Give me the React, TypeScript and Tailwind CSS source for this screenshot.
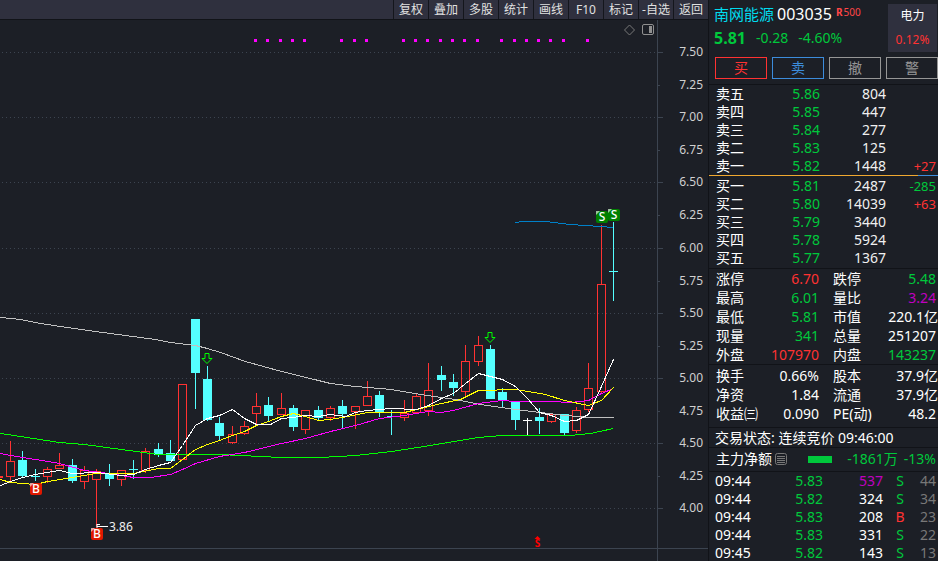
type Candle = {
  x: number;
  top: number;
  bottom: number;
  high: number;
  low: number;
  kind: "up" | "down" | "flat";
};

const UP = "#ff3232";
const DOWN = "#54ffff";

const c = (
  x: number,
  top: number,
  bottom: number,
  high: number,
  low: number,
  kind: Candle["kind"],
): Candle => ({ x, top, bottom, high, low, kind });

const candles: Candle[] = [
  c(-2, 476, 478, 476, 478, "up"),
  c(10, 461, 477, 441, 481, "up"),
  c(22, 460, 476, 451, 477, "down"),
  c(35, 476, 476, 469, 481, "down"),
  c(47, 469, 477, 467, 483, "up"),
  c(59, 465, 469, 453, 469, "up"),
  c(72, 465, 481, 459, 483, "down"),
  c(84, 470, 482, 466, 489, "up"),
  c(96, 471, 480, 469, 527, "up"),
  c(109, 473, 479, 464, 486, "down"),
  c(121, 470, 480, 470, 486, "up"),
  c(133, 469, 469, 460, 479, "down"),
  c(145, 451, 471, 448, 473, "up"),
  c(158, 449, 455, 443, 457, "down"),
  c(170, 453, 461, 440, 461, "down"),
  c(182, 384, 460, 384, 460, "up"),
  c(195, 319, 373, 319, 409, "down"),
  c(207, 379, 420, 366, 421, "down"),
  c(219, 423, 436, 417, 441, "down"),
  c(232, 434, 443, 426, 444, "up"),
  c(244, 426, 434, 421, 435, "up"),
  c(256, 406, 414, 393, 424, "up"),
  c(268, 405, 416, 397, 421, "down"),
  c(281, 408, 415, 393, 415, "up"),
  c(293, 408, 427, 405, 431, "down"),
  c(305, 410, 430, 410, 434, "up"),
  c(318, 410, 418, 406, 420, "down"),
  c(330, 408, 418, 406, 421, "up"),
  c(342, 406, 414, 400, 428, "down"),
  c(355, 406, 412, 406, 429, "up"),
  c(367, 396, 406, 381, 406, "up"),
  c(379, 395, 413, 391, 417, "down"),
  c(391, 416, 416, 410, 435, "down"),
  c(404, 413, 418, 400, 421, "up"),
  c(416, 396, 413, 394, 413, "up"),
  c(428, 390, 411, 363, 416, "up"),
  c(441, 375, 380, 366, 391, "down"),
  c(453, 382, 388, 374, 396, "down"),
  c(465, 361, 392, 345, 396, "up"),
  c(478, 345, 362, 336, 366, "up"),
  c(490, 349, 399, 345, 399, "down"),
  c(502, 392, 400, 388, 407, "down"),
  c(515, 401, 420, 401, 430, "down"),
  c(527, 420, 420, 418, 436, "flat"),
  c(539, 417, 421, 408, 434, "down"),
  c(551, 414, 422, 414, 423, "up"),
  c(564, 414, 433, 414, 435, "down"),
  c(576, 410, 431, 407, 433, "up"),
  c(588, 388, 410, 363, 412, "up"),
  c(601, 284, 392, 225, 393, "up"),
  c(613, 271, 271, 222, 301, "down"),
];

const averages = [
  {
    color: "#c0c0c0",
    points:
      "0,317 20,319 40,323 67,327 95,331 125,335 155,339 170,342 195,345 207,348 220,352 245,361 281,371 318,380 330,383 355,386 391,389 420,394 455,399 480,404 515,409 540,412 565,415 590,417 613,417",
  },
  {
    color: "#00ff00",
    points:
      "0,433 20,436 59,442 84,444 121,449 158,454 182,454 219,454 240,455 280,457 320,457 355,455 391,451 430,445 453,441 478,437 502,435 551,435 570,435 590,433 613,428",
  },
  {
    color: "#ff00ff",
    points:
      "0,453 10,455 35,459 59,463 84,470 109,473 133,477 150,477 170,474 182,469 195,463 219,456 244,452 281,443 305,438 330,431 355,425 379,418 404,415 428,411 440,412 453,410 478,403 502,400 515,401 551,401 570,402 588,400 601,393 613,388",
  },
  {
    color: "#ffff00",
    points:
      "0,479 10,482 35,484 47,481 72,477 96,473 133,473 158,468 170,468 182,459 195,449 207,444 219,440 232,435 244,431 256,425 268,421 281,416 293,413 305,416 318,420 330,419 342,417 367,412 404,412 416,409 441,403 460,399 478,390 515,389 527,391 545,394 564,400 588,405 601,400 613,387",
  },
  {
    color: "#ffffff",
    points:
      "0,485 10,481 22,477 35,474 47,472 59,470 72,473 96,472 121,475 133,474 145,469 158,465 170,462 182,445 195,425 207,418 219,415 232,409 244,418 256,424 270,424 281,418 293,417 305,415 318,416 330,414 345,416 355,412 367,410 391,408 416,409 428,405 441,398 453,393 465,383 478,373 490,376 502,379 515,386 527,398 539,412 551,415 564,421 576,420 588,414 601,386 613,359",
  },
  {
    color: "#0080c8",
    points: "515,222 522,221 545,221 570,224 600,226 613,227",
  },
];

const axis = [
  { label: "7.50", y: 52 },
  { label: "7.25", y: 85 },
  { label: "7.00", y: 117 },
  { label: "6.75", y: 150 },
  { label: "6.50", y: 182 },
  { label: "6.25", y: 215 },
  { label: "6.00", y: 248 },
  { label: "5.75", y: 281 },
  { label: "5.50", y: 313 },
  { label: "5.25", y: 346 },
  { label: "5.00", y: 378 },
  { label: "4.75", y: 411 },
  { label: "4.50", y: 443 },
  { label: "4.25", y: 476 },
  { label: "4.00", y: 508 },
];

const dots = [
  254, 266, 279, 291, 303, 340, 353, 365, 402, 414, 426, 439, 451, 463, 476,
  500, 513, 525, 537, 549, 562, 586,
];

const tools = ["复权", "叠加", "多股", "统计", "画线", "F10", "标记", "-自选", "返回"];

const asks = [
  ["卖五", "5.86", "804", ""],
  ["卖四", "5.85", "447", ""],
  ["卖三", "5.84", "277", ""],
  ["卖二", "5.83", "125", ""],
  ["卖一", "5.82", "1448", "+27"],
];

const bids = [
  ["买一", "5.81", "2487", "-285"],
  ["买二", "5.80", "14039", "+63"],
  ["买三", "5.79", "3440", ""],
  ["买四", "5.78", "5924", ""],
  ["买五", "5.77", "1367", ""],
];

const RED = "text-[#ff3232]";
const GREEN = "text-[#00c83c]";
const PURPLE = "text-[#c000c0]";
const WHITE = "text-white";

const quotes = [
  ["涨停", "6.70", RED, "跌停", "5.48", GREEN],
  ["最高", "6.01", GREEN, "量比", "3.24", PURPLE],
  ["最低", "5.81", GREEN, "市值", "220.1亿", WHITE],
  ["现量", "341", GREEN, "总量", "251207", WHITE],
  ["外盘", "107970", RED, "内盘", "143237", GREEN],
];

const basics = [
  ["换手", "0.66%", WHITE, "股本", "37.9亿", WHITE],
  ["净资", "1.84", WHITE, "流通", "37.9亿", WHITE],
  ["收益㈢", "0.090", WHITE, "PE(动)", "48.2", WHITE],
];

const trades = [
  ["09:44", "5.83", "537", "S", "44"],
  ["09:44", "5.82", "324", "S", "34"],
  ["09:44", "5.83", "208", "B", "23"],
  ["09:44", "5.83", "331", "S", "22"],
  ["09:45", "5.82", "143", "S", "13"],
];

function CandleShape({ x, top, bottom, high, low, kind }: Candle) {
  const color = kind === "up" ? UP : kind === "down" ? DOWN : "#ffffff";
  if (top === bottom) {
    return (
      <g fill={color}>
        <rect x={x} y={high} width={1} height={low - high} />
        <rect x={x - 4} y={top} width={9} height={1} />
      </g>
    );
  }
  if (kind === "up") {
    return (
      <g>
        <rect x={x} y={high} width={1} height={top - high} fill={color} />
        <rect x={x} y={bottom} width={1} height={low - bottom} fill={color} />
        <rect
          x={x - 3.5}
          y={top + 0.5}
          width={8}
          height={bottom - top - 1}
          fill="none"
          stroke={color}
        />
      </g>
    );
  }
  return (
    <g fill={color}>
      <rect x={x} y={high} width={1} height={low - high} />
      <rect x={x - 4} y={top} width={9} height={bottom - top} />
    </g>
  );
}

function Badge({ x, y, label, color }: { x: number; y: number; label: string; color: string }) {
  return (
    <g>
      <rect x={x - 5} y={y - 6} width={12} height={12} rx={2} fill={color} />
      <path d={`M${x - 5} ${y - 2}v-4h4z`} fill="#ffffff" opacity={0.6} />
      <text x={x + 1} y={y + 4} fontSize={12} fontWeight={500} fill="#ffffff" textAnchor="middle">
        {label}
      </text>
    </g>
  );
}

function DownArrow({ x, y }: { x: number; y: number }) {
  return (
    <path
      d={`M${x - 2} ${y}h4v5h3l-5 5l-5 -5h3z`}
      fill="none"
      stroke="#00ff00"
      strokeWidth={1}
    />
  );
}

function Chart() {
  return (
    <svg viewBox="0 19 708 542" className="block h-auto w-full" role="img" aria-label="K线">
      <g shapeRendering="crispEdges">
        <rect x={0} y={19} width={708} height={1} fill="#111318" />
        {axis.map(({ label, y }, i) => (
          <g key={label} stroke="#3c4450">
            {i % 2 === 0 && (
              <line x1={2} x2={656} y1={y + 0.5} y2={y + 0.5} strokeDasharray="1 3" />
            )}
            <line x1={658} x2={i % 2 === 0 ? 663 : 660} y1={y + 0.5} y2={y + 0.5} />
          </g>
        ))}
        <rect x={657} y={20} width={1} height={541} fill="#3c4450" />
        <rect x={0} y={548} width={708} height={1} fill="#3c4450" />
        {dots.map((x) => (
          <rect key={x} x={x} y={39} width={3} height={3} fill="#ff00ff" />
        ))}
        {candles.map((candle) => (
          <CandleShape key={candle.x} {...candle} />
        ))}
        {averages.map(({ color, points }) => (
          <polyline
            key={color}
            points={points}
            fill="none"
            stroke={color}
            transform="translate(0.5 0.5)"
          />
        ))}
      </g>

      {axis.map(({ label, y }) => (
        <text key={label} x={703} y={y + 4} fontSize={12} fill="#d0d0d0" textAnchor="end">
          {label}
        </text>
      ))}

      <path d="M629.5 25l5 5l-5 5l-5 -5z" fill="none" stroke="#787878" />
      <rect x={642.5} y={24.5} width={11} height={10} rx={1.5} fill="none" stroke="#909090" />
      <rect x={649} y={26} width={3} height={7} fill="#909090" />

      <DownArrow x={207} y={353.5} />
      <DownArrow x={490} y={332.5} />

      <Badge x={35} y={489} label="B" color="#e01800" />
      <Badge x={96} y={534} label="B" color="#e01800" />
      <Badge x={601} y={217} label="S" color="#008000" />
      <Badge x={613} y={215} label="S" color="#008000" />

      <path d="M97 526.5h11M97 524v4M97 524.5h3" fill="none" stroke="#ffffff" />
      <text x={109} y={531} fontSize={12} fill="#f0f0f0">
        3.86
      </text>

      <path d="M534.5 539l3 -3l3 3z" fill="#ff0000" />
      <text x={537.5} y={547} fontSize={10} fontWeight={700} fill="#ff0000" textAnchor="middle">
        S
      </text>
    </svg>
  );
}

function BookTable({ rows, label }: { rows: string[][]; label: string }) {
  return (
    <table aria-label={label} className="w-full table-fixed text-right text-sm leading-[18px]">
      <colgroup>
        <col className="w-[50px]" />
        <col className="w-[61px]" />
        <col className="w-[66px]" />
        <col />
      </colgroup>
      <tbody>
        {rows.map(([name, price, volume, delta]) => (
          <tr key={name}>
            <th className="pl-[7px] text-left font-normal">{name}</th>
            <td className="text-[#00c83c]">{price}</td>
            <td className="text-[#f0f0f0]">{volume}</td>
            <td
              className={`pr-0.5 text-[13px] leading-[18px] ${delta.startsWith("+") ? RED : GREEN}`}
            >
              {delta}
            </td>
          </tr>
        ))}
      </tbody>
    </table>
  );
}

function StatTable({ rows, label }: { rows: string[][]; label: string }) {
  return (
    <table
      aria-label={label}
      className="w-full table-fixed whitespace-nowrap text-right text-sm leading-[19px]"
    >
      <colgroup>
        <col className="w-[50px]" />
        <col className="w-[60px]" />
        <col className="w-[56px]" />
        <col />
      </colgroup>
      <tbody>
        {rows.map(([name, value, color, name2, value2, color2]) => (
          <tr key={name}>
            <th className="pl-[7px] text-left font-normal">{name}</th>
            <td className={color}>{value}</td>
            <th className="pl-3.5 text-left font-normal">{name2}</th>
            <td className={`${value2.endsWith("亿") ? "" : "pr-0.5"} ${color2}`}>{value2}</td>
          </tr>
        ))}
      </tbody>
    </table>
  );
}

function QuotePanel() {
  return (
    <aside className="w-[230px] shrink-0 border-l border-[#111318]">
      <header className="flex justify-between pt-1 pr-px">
        <div className="pl-[5px]">
          <div className="flex items-start whitespace-nowrap leading-5">
            <h1 className="text-[15px] leading-5 text-[#00dcf0]">南网能源</h1>
            <span className="ml-[3px] text-base leading-5">003035</span>
            <span className="ml-1 flex gap-px text-[10px] leading-4 text-[#ff4646]">
              <b>R</b>
              <span>500</span>
            </span>
          </div>
          <div className="flex items-center gap-2.5 pt-0.5 text-sm leading-6 text-[#00c83c]">
            <b className="text-base leading-6">5.81</b>
            <span>-0.28</span>
            <span>-4.60%</span>
          </div>
        </div>
        <a
          href="#sector"
          className="flex h-12 w-[49px] flex-col items-center justify-between bg-[#2f303e] py-0.5 text-xs leading-5"
        >
          <span>电力</span>
          <span className="text-[#ff3232]">0.12%</span>
        </a>
      </header>

      <div className="mt-[5px] grid grid-cols-4 gap-[5px] pl-1.5 text-sm leading-5">
        <button className="border border-[#ff3232] text-[#ff3232]">买</button>
        <button className="border border-[#3c8cdc] text-[#3c8cdc]">卖</button>
        <button className="border border-[#969696] text-[#969696]">撤</button>
        <button className="border border-[#969696] text-[#969696]">警</button>
      </div>

      <div className="mt-[5px] border-t border-[#111318]">
        <BookTable rows={asks} label="卖盘" />
        <div className="mb-px flex h-px">
          <div className="flex-[209] bg-[#f0a830]" />
          <div className="flex-[20] bg-[#3c8cdc]" />
        </div>
        <BookTable rows={bids} label="买盘" />
      </div>
      <div className="mt-px border-t border-[#111318]">
        <StatTable rows={quotes} label="行情" />
      </div>
      <div className="border-t border-[#111318] pt-px pb-1">
        <StatTable rows={basics} label="基本面" />
      </div>
      <p className="whitespace-nowrap border-t border-[#111318] pl-1.5 text-sm leading-[19px]">
        交易状态: 连续竞价 09:46:00
      </p>
      <div className="flex items-center whitespace-nowrap border-t border-[#111318] pr-0.5 pb-px pl-[7px] text-sm leading-[22px]">
        <span>主力净额</span>
        <svg viewBox="0 0 12 12" className="ml-[3px] size-3" fill="none" stroke="#787878">
          <rect x="0.5" y="0.5" width="11" height="11" rx="2" />
          <path d="M2 3.5h8M2 5.5h8M2 7.5h8M2 9.5h8" />
        </svg>
        <span className="ml-[21px] h-[7px] w-6 bg-[#00c83c]" />
        <span className="ml-auto flex gap-1.5 text-[#00c83c]">
          <span>-1861万</span>
          <span>-13%</span>
        </span>
      </div>
      <table
        aria-label="成交明细"
        className="w-full table-fixed border-t border-[#111318] text-right text-sm leading-[18px]"
      >
        <colgroup>
          <col className="w-[50px]" />
          <col className="w-[64px]" />
          <col className="w-[60px]" />
          <col className="w-[34px]" />
          <col />
        </colgroup>
        <tbody>
          {trades.map(([time, price, volume, side, count], i) => (
            <tr key={i}>
              <td className="pl-1.5 text-left">{time}</td>
              <td className="text-[#00c83c]">{price}</td>
              <td className={volume === "537" ? PURPLE : WHITE}>{volume}</td>
              <td className={`text-center ${side === "B" ? RED : GREEN}`}>{side}</td>
              <td className="pr-0.5 text-[#787878]">{count}</td>
            </tr>
          ))}
        </tbody>
      </table>
    </aside>
  );
}

export default function App() {
  return (
    <div className="flex h-screen overflow-hidden bg-[#1c1f26] font-['Noto_Sans','Noto_Sans_CJK_SC',sans-serif] text-white">
      <main className="min-w-0 flex-1">
        <nav className="flex justify-end bg-[#2f303e]">
          <div className="grid grid-cols-9">
            {tools.map((tool) => (
              <button
                key={tool}
                className="w-[35px] whitespace-nowrap border-l border-[#14161c] text-center text-xs leading-[19px] text-[#e0e0e0]"
              >
                {tool}
              </button>
            ))}
          </div>
        </nav>
        <Chart />
      </main>
      <QuotePanel />
    </div>
  );
}
